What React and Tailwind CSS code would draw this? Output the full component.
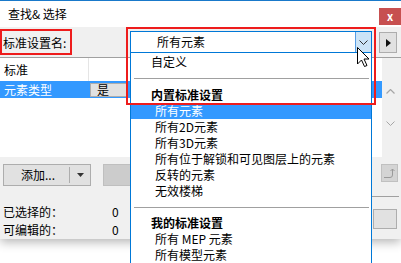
import React from 'react';

const font = "font-['Noto_Sans_CJK_SC','Microsoft_YaHei',sans-serif]";

const ChevronDown = ({ className }) => (
  <svg className={className} width="9" height="5" viewBox="0 0 9 5" fill="none" stroke="currentColor" strokeWidth="1">
    <path d="M0.5 0.5 L4.5 4.5 L8.5 0.5" />
  </svg>
);

const ChevronUp = ({ className }) => (
  <svg className={className} width="9" height="5" viewBox="0 0 9 5" fill="none" stroke="currentColor" strokeWidth="1.2">
    <path d="M0.5 4.5 L4.5 0.5 L8.5 4.5" />
  </svg>
);

const DropItem = ({ label, selected }) => (
  <div
    className={`h-[16px] flex items-center pl-[24px] ${
      selected ? 'bg-[#3399ff] text-white' : 'text-black'
    }`}
  >
    {label}
  </div>
);

const DropHeader = ({ label }) => (
  <div className="h-[16px] flex items-center pl-[20px] font-bold text-black">{label}</div>
);

const Separator = ({ h, top }) => (
  <div className={`${h} relative`}>
    <div className={`absolute left-[3px] right-[2px] ${top} h-px bg-[#a0a0a0]`}></div>
  </div>
);

const App = () => {
  return (
    <div className={`relative w-[401px] h-[263px] bg-white overflow-hidden text-[12px] leading-none ${font}`}>
      {/* dialog */}
      <div className="w-[401px] h-[239px] bg-[#f0f0f0] shadow-[0_3px_10px_rgba(0,0,0,0.3)] flex flex-col">
        <div className="h-px bg-[#1979ca]"></div>

        {/* title bar */}
        <div className="h-[26px] bg-white flex justify-between">
          <div className="pl-[8px] pt-[7px] text-black">查找&amp; 选择</div>
          <div className="mt-[7px] w-[22px] h-[17px] bg-[#c75050] flex items-center justify-center text-white text-[11px] font-bold">
            x
          </div>
        </div>

        {/* name row */}
        <div className="mt-[4px] h-[23px] flex items-center">
          <div className="w-[130px] pl-[3px] text-black">标准设置名:</div>
          <div className="w-[242px] h-[23px] bg-white border border-[#0078d7] border-b-2 flex items-center">
            <div className="flex-1 pl-[26px] text-black">所有元素</div>
            <div className="w-[16px] h-[20px] bg-[#cce4f7] border-l border-[#569de5] flex items-center justify-center text-[#333]">
              <ChevronDown />
            </div>
          </div>
          <div className="ml-[7px] w-[18px] h-[21px] bg-[#e1e1e1] border border-[#adadad] flex items-center justify-center">
            <svg width="5" height="8" viewBox="0 0 5 8">
              <path d="M0 0 L5 4 L0 8 Z" fill="#111" />
            </svg>
          </div>
        </div>

        {/* criteria table */}
        <div className="mt-[3px] h-[100px] flex border-t border-[#a0a0a0]">
          <div className="w-[382px] bg-white flex flex-col">
            <div className="h-[23px] flex">
              <div className="w-[89px] pl-[4px] flex items-center text-black border-r border-[#e5e5e5]">标准</div>
              <div className="flex-1"></div>
            </div>
            <div className="h-[17px] bg-[#3399ff] flex items-center">
              <div className="w-[90px] pl-[4px] text-white">元素类型</div>
              <div className="w-[38px] h-[14px] bg-[#e1e1e1] border border-[#adadad] flex items-center pl-[6px] text-black">是</div>
            </div>
          </div>
          <div className="w-[17px] flex flex-col items-center justify-between py-[31px] text-[#a6a6a6]">
            <ChevronUp />
            <ChevronDown />
          </div>
        </div>

        {/* buttons */}
        <div className="mt-[7px] h-[22px] flex">
          <div className="ml-[3px] w-[88px] h-[22px] bg-[#e1e1e1] border border-[#adadad] flex items-center">
            <div className="w-[65px] pl-[17px] text-black">添加...</div>
            <div className="w-px h-[16px] bg-[#adadad]"></div>
            <div className="flex-1 flex justify-center">
              <svg width="7" height="4" viewBox="0 0 7 4">
                <path d="M0 0 L7 0 L3.5 4 Z" fill="#333" />
              </svg>
            </div>
          </div>
          <div className="ml-[12px] w-[150px] h-[22px] bg-[#cccccc] border border-[#bfbfbf]"></div>
          <div className="ml-[128px] w-[17px] h-[18px] bg-[#d4d4d4] border border-[#c0c0c0] flex items-center justify-center">
            <svg width="12" height="10" viewBox="0 0 12 10" fill="none" stroke="#9a9a9a" strokeWidth="1">
              <path d="M0 9.5 H6 Q8.5 9.5 8.5 7 V1" />
              <path d="M6.5 3 L8.5 1 L10.5 3" />
            </svg>
          </div>
        </div>

        {/* counters */}
        <div className="flex-1 flex">
          <div className="w-[372px] pt-[17px] flex flex-col text-black">
            <div className="h-[18px] flex items-center">
              <div className="w-[112px] pl-[3px]">已选择的：</div>
              <div>0</div>
            </div>
            <div className="h-[18px] flex items-center">
              <div className="w-[112px] pl-[3px]">可编辑的：</div>
              <div>0</div>
            </div>
          </div>
          <div className="w-[27px] flex flex-col">
            <div className="mt-[10px] h-px bg-[#a0a0a0]"></div>
            <div className="mt-[12px] ml-px w-[24px] h-[20px] bg-[#e1e1e1] border border-[#adadad]"></div>
          </div>
        </div>
      </div>

      {/* open dropdown list */}
      <div className="absolute left-[130px] top-[53px] w-[242px] h-[215px] bg-white border-x border-b border-[#0078d7] pt-px">
        <div className="h-[16px] flex items-center pl-[20px] text-black">自定义</div>
        <Separator h="h-[17px]" top="top-[8px]" />
        <DropHeader label="内置标准设置" />
        <DropItem label="所有元素" selected />
        <DropItem label="所有2D元素" />
        <DropItem label="所有3D元素" />
        <DropItem label="所有位于解锁和可见图层上的元素" />
        <DropItem label="反转的元素" />
        <DropItem label="无效楼梯" />
        <Separator h="h-[16px]" top="top-[8px]" />
        <DropHeader label="我的标准设置" />
        <DropItem label="所有 MEP 元素" />
        <DropItem label="所有模型元素" />
      </div>

      {/* highlight boxes */}
      <div className="absolute left-0 top-[29px] w-[72px] h-[26px] border-2 border-[#ee1c1c]"></div>
      <div className="absolute left-[126px] top-[27px] w-[250px] h-[78px] border-2 border-[#ee1c1c]"></div>

      {/* mouse cursor */}
      <svg className="absolute left-[357px] top-[47px]" width="13" height="21" viewBox="0 0 13 21">
        <path d="M0.5 0.5 L0.5 17 L4.5 13 L7.5 19.5 L10 18.5 L7 12 L12 12 Z" fill="white" stroke="black" strokeWidth="1" />
      </svg>
    </div>
  );
};

export default App;
